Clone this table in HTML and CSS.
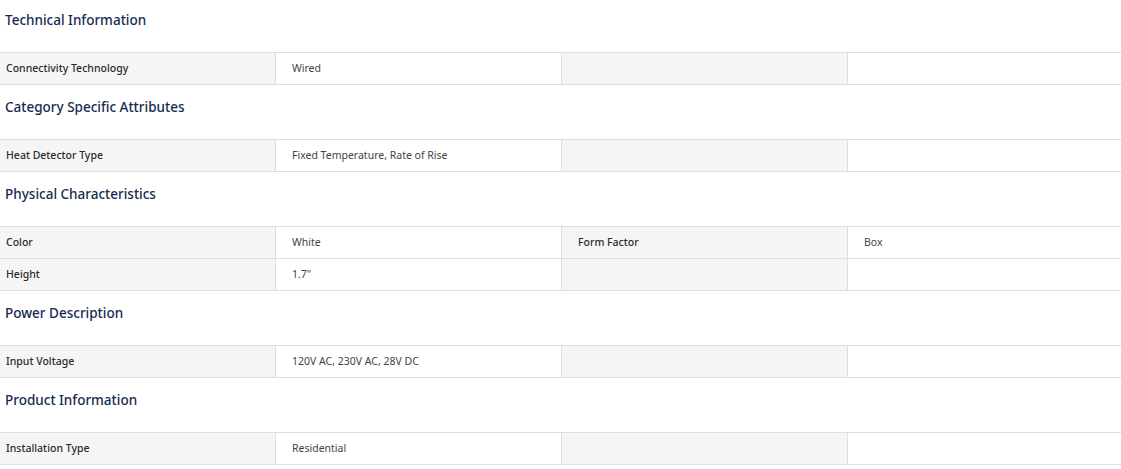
FILE: index.html
```html
<!DOCTYPE html>
<html>
<head>
<meta charset="utf-8">
<link rel="stylesheet" href="styles.css">
</head>
<body>
<div class="specs">
  <section class="group">
    <h3 class="group-title">Technical Information</h3>
    <div class="table">
      <div class="row">
        <div class="cell label">Connectivity Technology</div>
        <div class="cell value">Wired</div>
        <div class="cell label"></div>
        <div class="cell value"></div>
      </div>
    </div>
  </section>
  <section class="group">
    <h3 class="group-title">Category Specific Attributes</h3>
    <div class="table">
      <div class="row">
        <div class="cell label">Heat Detector Type</div>
        <div class="cell value">Fixed Temperature, Rate of Rise</div>
        <div class="cell label"></div>
        <div class="cell value"></div>
      </div>
    </div>
  </section>
  <section class="group">
    <h3 class="group-title">Physical Characteristics</h3>
    <div class="table">
      <div class="row">
        <div class="cell label">Color</div>
        <div class="cell value">White</div>
        <div class="cell label">Form Factor</div>
        <div class="cell value">Box</div>
      </div>
      <div class="row">
        <div class="cell label">Height</div>
        <div class="cell value">1.7"</div>
        <div class="cell label"></div>
        <div class="cell value"></div>
      </div>
    </div>
  </section>
  <section class="group">
    <h3 class="group-title">Power Description</h3>
    <div class="table">
      <div class="row">
        <div class="cell label">Input Voltage</div>
        <div class="cell value">120V AC, 230V AC, 28V DC</div>
        <div class="cell label"></div>
        <div class="cell value"></div>
      </div>
    </div>
  </section>
  <section class="group">
    <h3 class="group-title">Product Information</h3>
    <div class="table">
      <div class="row">
        <div class="cell label">Installation Type</div>
        <div class="cell value">Residential</div>
        <div class="cell label"></div>
        <div class="cell value"></div>
      </div>
    </div>
  </section>
</div>
</body>
</html>
```
FILE: styles.css
```css
html, body {
  margin: 0;
  padding: 0;
  background: #fff;
  overflow: hidden;
}
body {
  font-family: "Noto Sans", "Open Sans", sans-serif;
  color: #333;
}
.specs {
  display: flex;
  flex-direction: column;
}
.group-title {
  margin: 0;
  padding: 11px 0 0 5px;
  height: 52px;
  box-sizing: border-box;
  font-size: 13.5px;
  font-weight: 500;
  color: #172b50;
  line-height: 18px;
}
.group + .group .group-title {
  height: 54px;
  padding-top: 13px;
}
.table {
  margin-left: -10px;
  width: 1144px;
  border-top: 1px solid #dedede;
}
.row {
  display: grid;
  grid-template-columns: 286px 286px 286px 286px;
  height: 32px;
  border-bottom: 1px solid #dedede;
  box-sizing: border-box;
}
.cell {
  padding: 0 16px 2px;
  display: flex;
  align-items: center;
  font-size: 10.5px;
  border-right: 1px solid #dedede;
}
.cell.label {
  background: #f5f5f5;
  font-weight: 500;
  color: #2b2b2b;
}
.cell.value {
  background: #fff;
  color: #444;
}
```
